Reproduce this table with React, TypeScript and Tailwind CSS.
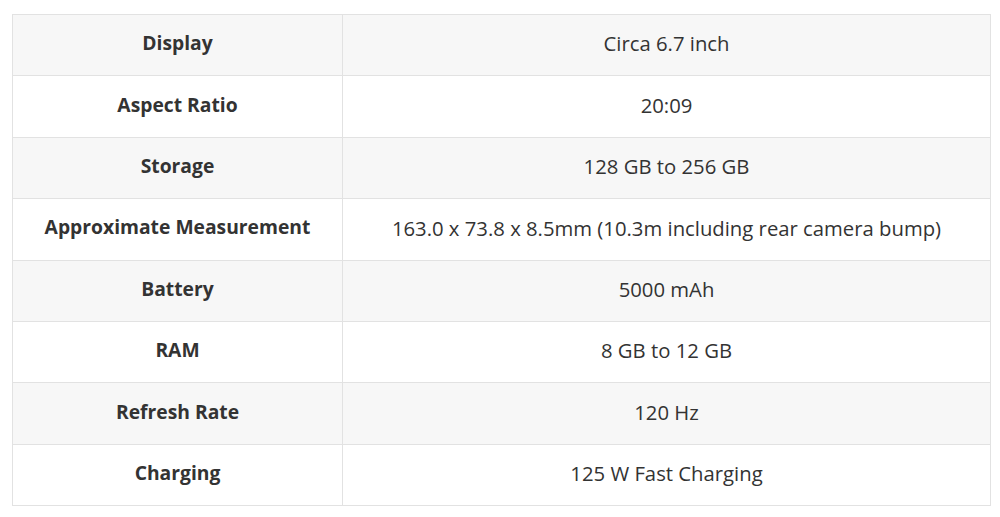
const specs = [
  ['Display', 'Circa 6.7 inch'],
  ['Aspect Ratio', '20:09'],
  ['Storage', '128 GB to 256 GB'],
  ['Approximate Measurement', '163.0 x 73.8 x 8.5mm (10.3m including rear camera bump)'],
  ['Battery', '5000 mAh'],
  ['RAM', '8 GB to 12 GB'],
  ['Refresh Rate', '120 Hz'],
  ['Charging', '125 W Fast Charging'],
]

export default function App() {
  return (
    <div className="w-[1000px] h-[517px] bg-white pt-[14px] pl-[12px] font-['Open_Sans',sans-serif] text-[#333]">
      <table className="w-[979px] border-collapse border border-[#e2e2e2] table-fixed">
        <colgroup>
          <col className="w-[330px]" />
          <col />
        </colgroup>
        <tbody>
          {specs.map(([label, value], i) => (
            <tr key={label} className={i % 2 === 0 ? 'bg-[#f7f7f7] h-[61.4px]' : 'bg-white h-[61.4px]'}>
              <td className="border border-[#e2e2e2] text-center font-bold text-[19.3px] pt-0 pb-[3px]">{label}</td>
              <td className="border border-[#e2e2e2] text-center text-[20.3px] pt-0 pb-[3px]">{value}</td>
            </tr>
          ))}
        </tbody>
      </table>
    </div>
  )
}
